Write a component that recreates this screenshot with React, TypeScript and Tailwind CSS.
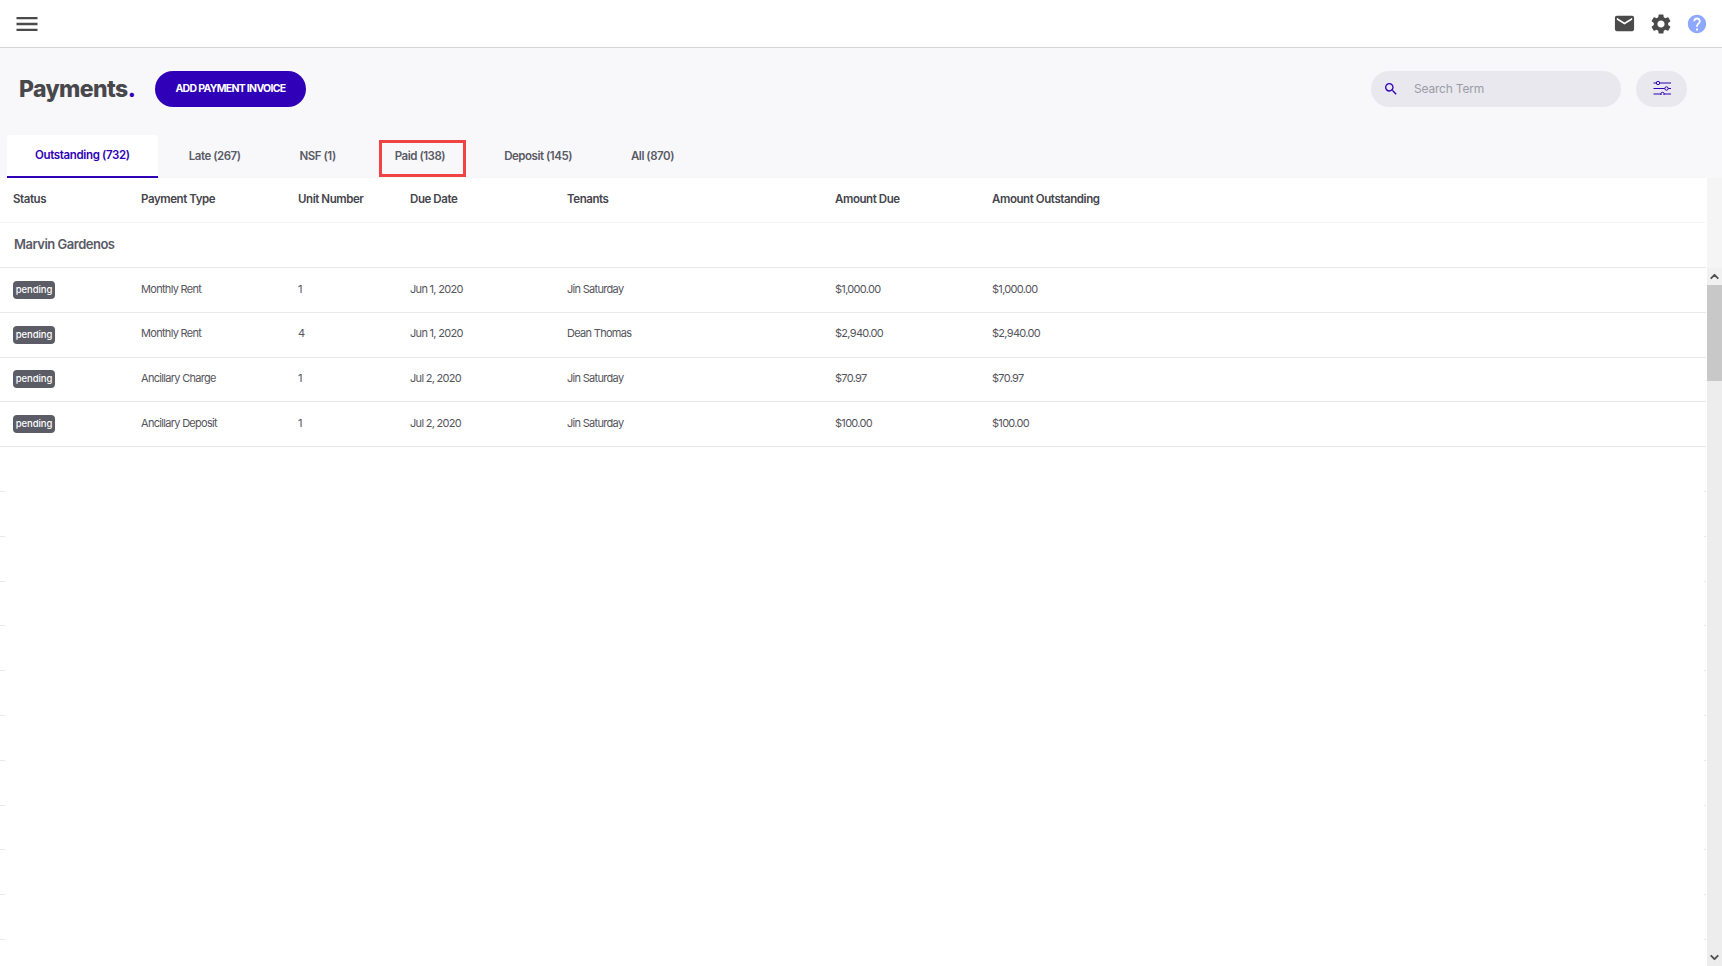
import { ChevronDown, ChevronUp } from "lucide-react"
import { MdHelp, MdMail, MdMenu, MdSearch, MdSettings } from "react-icons/md"

const COLUMNS = "grid grid-cols-[128px_157px_112px_157px_268px_157px_1fr] pl-[13px] items-center"

const TABS = [
  { label: "Outstanding (732)", active: true },
  { label: "Late (267)" },
  { label: "NSF (1)" },
  { label: "Paid (138)", boxed: true },
  { label: "Deposit (145)" },
  { label: "All (870)" },
]

const HEADERS = ["Status", "Payment Type", "Unit Number", "Due Date", "Tenants", "Amount Due", "Amount Outstanding"]

const ROWS = [
  { type: "Monthly Rent", unit: "1", due: "Jun 1, 2020", tenant: "Jin Saturday", amount: "$1,000.00" },
  { type: "Monthly Rent", unit: "4", due: "Jun 1, 2020", tenant: "Dean Thomas", amount: "$2,940.00" },
  { type: "Ancillary Charge", unit: "1", due: "Jul 2, 2020", tenant: "Jin Saturday", amount: "$70.97" },
  { type: "Ancillary Deposit", unit: "1", due: "Jul 2, 2020", tenant: "Jin Saturday", amount: "$100.00" },
]

// drawn by hand, none of the packages has these knobs
function FilterIcon() {
  return (
    <svg width="18" height="14" viewBox="0 0 18 14" fill="none" stroke="#3000b8" strokeWidth="1">
      <path d="M0.5 2H18M0.5 7.5H18M0.5 13H18" />
      <circle cx="5" cy="2" r="1.7" fill="#e8e8ee" />
      <circle cx="13.5" cy="7.5" r="1.7" fill="#e8e8ee" />
      <circle cx="9.5" cy="13" r="1.7" fill="#e8e8ee" />
    </svg>
  )
}

export default function App() {
  return (
    <div className="h-screen flex flex-col overflow-hidden bg-[#f8f8fb] font-['Inter',sans-serif] text-[#55555c]">
      {/* Top bar */}
      <div className="h-[48px] shrink-0 flex items-center bg-white border-b border-[#d6d6d8] pl-[13px] pr-[14px]">
        <MdMenu className="w-[28px] h-[28px] text-[#4a4a4a]" />
        <div className="ml-auto flex items-center">
          <MdMail className="w-[23px] h-[23px] text-[#4a4a4a]" />
          <MdSettings className="w-[24px] h-[24px] text-[#4a4a4a] ml-[13px]" />
          <MdHelp className="w-[22px] h-[22px] text-[#8fa8ff] ml-[13px]" />
        </div>
      </div>

      {/* Page heading */}
      <div className="h-[87px] shrink-0 flex items-start pt-[23px] pl-[19px] pr-[35px]">
        <h1 className="w-[136px] h-[36px] flex items-center text-[23px] font-extrabold tracking-[-0.6px] text-[#48484c]">
          Payments<span className="text-[#3000b8]">.</span>
        </h1>
        <button className="w-[151px] h-[36px] rounded-full bg-[#3000b8] text-white text-[10.5px] font-bold tracking-[-0.7px]">
          ADD PAYMENT INVOICE
        </button>
        <div className="ml-auto w-[250px] h-[36px] rounded-full bg-[#e8e8ee] flex items-center pl-[12px]">
          <MdSearch className="w-[16px] h-[16px] text-[#3000b8]" />
          <span className="ml-[15px] pb-[1px] text-[12px] tracking-[-0.2px] text-[#9c9ca6]">Search Term</span>
        </div>
        <div className="ml-[15px] w-[51px] h-[36px] pb-[3px] rounded-full bg-[#e8e8ee] flex items-center justify-center">
          <FilterIcon />
        </div>
      </div>

      {/* Tabs */}
      <div className="h-[43px] shrink-0 flex gap-[3px] pl-[7px]">
        {TABS.map((tab) => (
          <div
            key={tab.label}
            className={`relative h-full flex items-center px-[28px] pt-[1px] text-[11.5px] font-semibold ${
              tab.active
                ? "bg-white rounded-t-[4px] border-b-2 border-[#3000b8] text-[#3000b8] tracking-[-0.35px]"
                : "text-[#5a5a66] tracking-[-0.47px]"
            }`}
          >
            {tab.label}
            {tab.boxed && (
              <span className="absolute left-[12px] right-[7px] top-[5px] bottom-[1px] border-[3px] border-[#f04444]" />
            )}
          </div>
        ))}
      </div>

      <div className="flex-1 min-h-0 flex">
        {/* Table */}
        <div className="flex-1 min-w-0 bg-white overflow-hidden">
          <div className={`${COLUMNS} h-[45px] border-b border-[#f3f3f8] text-[11.5px] font-semibold tracking-[-0.42px] text-[#45454d]`}>
            {HEADERS.map((h) => (
              <span key={h}>{h}</span>
            ))}
          </div>
          <div className="h-[45px] flex items-center pl-[14px] border-b border-[#e8e8ea] text-[13px] font-semibold tracking-[-0.5px] text-[#5a5a66]">
            Marvin Gardenos
          </div>
          {ROWS.map((row, i) => (
            <div key={i} className={`${COLUMNS} h-[44.8px] pb-[2px] border-b border-[#e8e8ea] text-[11px] tracking-[-0.7px]`}>
              <span className="w-[42px] h-[18px] mt-[2px] rounded-[4px] bg-[#5c5c66] text-white text-[9.5px] font-medium tracking-[-0.1px] flex items-center justify-center">
                pending
              </span>
              <span>{row.type}</span>
              <span>{row.unit}</span>
              <span>{row.due}</span>
              <span>{row.tenant}</span>
              <span>{row.amount}</span>
              <span>{row.amount}</span>
            </div>
          ))}
          {/* Empty rows, only the ends of their borders show */}
          {Array.from({ length: 11 }).map((_, i) => (
            <div key={i} className="h-[44.8px] flex items-end justify-between">
              <span className="w-[5px] h-px bg-[#e8e8ea]" />
              <span className="w-[2px] h-px bg-[#e8e8ea]" />
            </div>
          ))}
        </div>

        {/* Scrollbar */}
        <div className="w-[16px] shrink-0 flex flex-col bg-[#ededed] border-l border-white">
          <div className="h-[90px] bg-[#f5f5f5]" />
          <div className="h-[17px] bg-[#f1f1f1] flex items-center justify-center">
            <ChevronUp className="w-[13px] h-[13px] text-[#505050]" strokeWidth={3.5} />
          </div>
          <div className="h-[96px] bg-[#c8c8c8]" />
          <div className="flex-1" />
          <div className="h-[17px] flex items-center justify-center">
            <ChevronDown className="w-[13px] h-[13px] text-[#505050]" strokeWidth={3.5} />
          </div>
        </div>
      </div>
    </div>
  )
}
